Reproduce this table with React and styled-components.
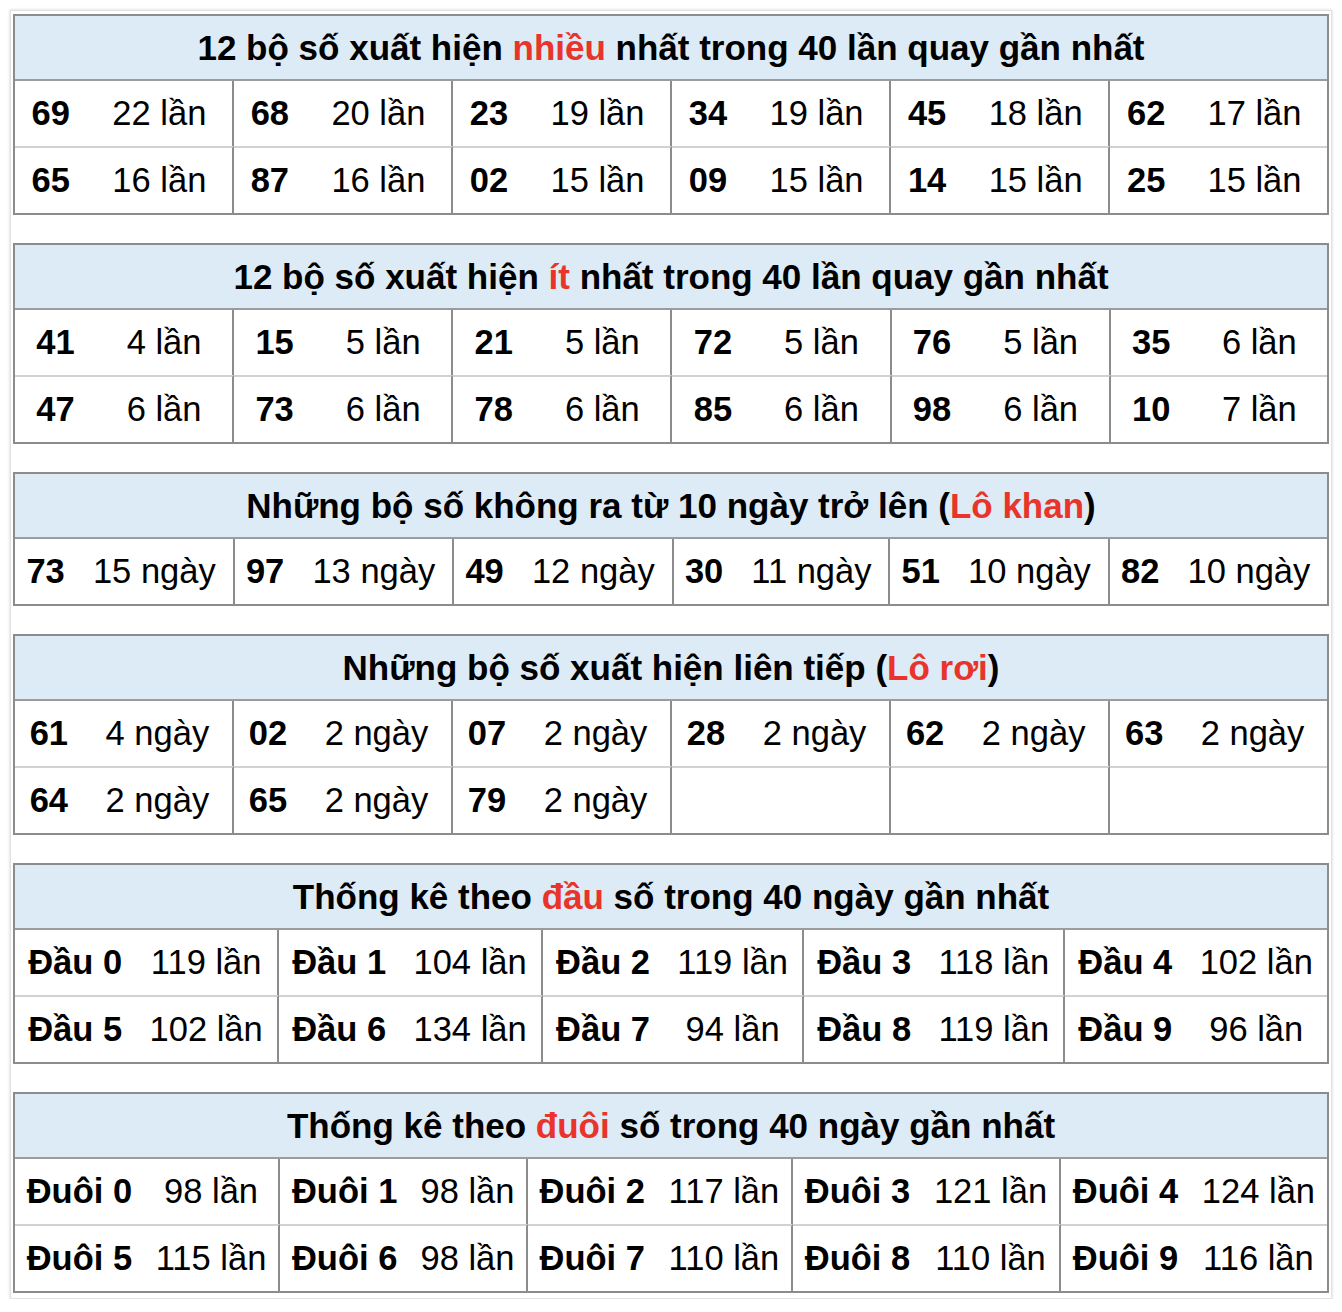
import React from "react";
import styled, { createGlobalStyle } from "styled-components";

const Global = createGlobalStyle`
  html, body { margin: 0; padding: 0; background: #ffffff; }
  body { font-family: "Liberation Sans", Arial, Helvetica, sans-serif; color: #000; }
`;

const Frame = styled.div`
  box-sizing: border-box;
  width: 1322px;
  margin: 10px 0 0 10px;
  padding: 3px 2px 5px 2px;
  background: #fff;
  border: 1px solid #e2e2e2;
  box-shadow: 0 0 3px rgba(0, 0, 0, 0.18);
  display: flex;
  flex-direction: column;
  gap: 28px;
`;

const Table = styled.table`
  width: 100%;
  border-collapse: separate;
  border-spacing: 0;
  border: 2px solid #8c8c8c;
  font-family: "Liberation Sans", Arial, Helvetica, sans-serif;
`;

const Head = styled.th`
  background: #ddebf6;
  font-size: 35px;
  font-weight: 700;
  line-height: 39px;
  padding: 12px 8px;
  text-align: center;
  border-bottom: 2px solid #9c9c9c;
  white-space: nowrap;
`;

const Red = styled.span`
  color: #e8342a;
`;

const Cell = styled.td`
  font-size: 34.5px;
  line-height: 39px;
  padding: 13px 8px;
  text-align: center;
  white-space: nowrap;
  font-weight: ${(p) => (p.$bold ? 700 : 400)};
  border-top: ${(p) => (p.$second ? "2px solid #d2d2d2" : "0")};
  border-right: ${(p) => (p.$last || p.$bold ? "0" : "2px solid #8c8c8c")};
`;

const sections = [
  {
    title: ["12 bộ số xuất hiện ", "nhiều", " nhất trong 40 lần quay gần nhất"],
    rows: [
      [["69", "22 lần"], ["68", "20 lần"], ["23", "19 lần"], ["34", "19 lần"], ["45", "18 lần"], ["62", "17 lần"]],
      [["65", "16 lần"], ["87", "16 lần"], ["02", "15 lần"], ["09", "15 lần"], ["14", "15 lần"], ["25", "15 lần"]],
    ],
  },
  {
    title: ["12 bộ số xuất hiện ", "ít", " nhất trong 40 lần quay gần nhất"],
    rows: [
      [["41", "4 lần"], ["15", "5 lần"], ["21", "5 lần"], ["72", "5 lần"], ["76", "5 lần"], ["35", "6 lần"]],
      [["47", "6 lần"], ["73", "6 lần"], ["78", "6 lần"], ["85", "6 lần"], ["98", "6 lần"], ["10", "7 lần"]],
    ],
  },
  {
    title: ["Những bộ số không ra từ 10 ngày trở lên (", "Lô khan", ")"],
    rows: [
      [["73", "15 ngày"], ["97", "13 ngày"], ["49", "12 ngày"], ["30", "11 ngày"], ["51", "10 ngày"], ["82", "10 ngày"]],
    ],
  },
  {
    title: ["Những bộ số xuất hiện liên tiếp (", "Lô rơi", ")"],
    rows: [
      [["61", "4 ngày"], ["02", "2 ngày"], ["07", "2 ngày"], ["28", "2 ngày"], ["62", "2 ngày"], ["63", "2 ngày"]],
      [["64", "2 ngày"], ["65", "2 ngày"], ["79", "2 ngày"], ["", ""], ["", ""], ["", ""]],
    ],
  },
  {
    title: ["Thống kê theo ", "đầu", " số trong 40 ngày gần nhất"],
    rows: [
      [["Đầu 0", "119 lần"], ["Đầu 1", "104 lần"], ["Đầu 2", "119 lần"], ["Đầu 3", "118 lần"], ["Đầu 4", "102 lần"]],
      [["Đầu 5", "102 lần"], ["Đầu 6", "134 lần"], ["Đầu 7", "94 lần"], ["Đầu 8", "119 lần"], ["Đầu 9", "96 lần"]],
    ],
  },
  {
    title: ["Thống kê theo ", "đuôi", " số trong 40 ngày gần nhất"],
    rows: [
      [["Đuôi 0", "98 lần"], ["Đuôi 1", "98 lần"], ["Đuôi 2", "117 lần"], ["Đuôi 3", "121 lần"], ["Đuôi 4", "124 lần"]],
      [["Đuôi 5", "115 lần"], ["Đuôi 6", "98 lần"], ["Đuôi 7", "110 lần"], ["Đuôi 8", "110 lần"], ["Đuôi 9", "116 lần"]],
    ],
  },
];

function StatTable({ title, rows }) {
  const cols = rows[0].length * 2;
  return (
    <Table>
      <thead>
        <tr>
          <Head colSpan={cols}>
            {title[0]}
            <Red>{title[1]}</Red>
            {title[2]}
          </Head>
        </tr>
      </thead>
      <tbody>
        {rows.map((row, ri) => (
          <tr key={ri}>
            {row.map(([num, val], ci) => (
              <React.Fragment key={ci}>
                <Cell $bold $second={ri > 0}>
                  {num}
                </Cell>
                <Cell $second={ri > 0} $last={ci === row.length - 1}>
                  {val}
                </Cell>
              </React.Fragment>
            ))}
          </tr>
        ))}
      </tbody>
    </Table>
  );
}

export default function App() {
  return (
    <>
      <Global />
      <Frame>
        {sections.map((s, i) => (
          <StatTable key={i} title={s.title} rows={s.rows} />
        ))}
      </Frame>
    </>
  );
}
